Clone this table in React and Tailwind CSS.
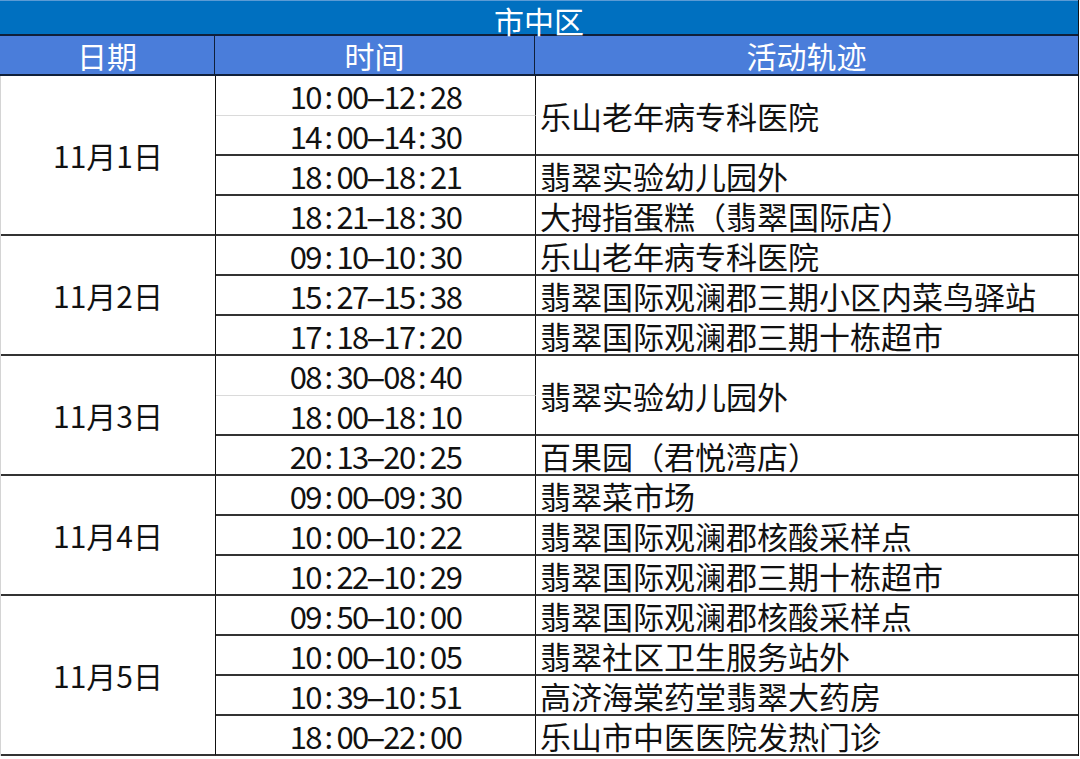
import React from "react";

// 每天的行程：span 表示地点单元格向下合并的行数，light 表示时间格下方是浅色分隔线
const days = [
  {
    date: "11月1日",
    rows: [
      { time: "10:00-12:28", place: "乐山老年病专科医院", span: 2, light: true },
      { time: "14:00-14:30" },
      { time: "18:00-18:21", place: "翡翠实验幼儿园外" },
      { time: "18:21-18:30", place: "大拇指蛋糕（翡翠国际店）" },
    ],
  },
  {
    date: "11月2日",
    rows: [
      { time: "09:10-10:30", place: "乐山老年病专科医院" },
      { time: "15:27-15:38", place: "翡翠国际观澜郡三期小区内菜鸟驿站" },
      { time: "17:18-17:20", place: "翡翠国际观澜郡三期十栋超市" },
    ],
  },
  {
    date: "11月3日",
    rows: [
      { time: "08:30-08:40", place: "翡翠实验幼儿园外", span: 2, light: true },
      { time: "18:00-18:10" },
      { time: "20:13-20:25", place: "百果园（君悦湾店）" },
    ],
  },
  {
    date: "11月4日",
    rows: [
      { time: "09:00-09:30", place: "翡翠菜市场" },
      { time: "10:00-10:22", place: "翡翠国际观澜郡核酸采样点" },
      { time: "10:22-10:29", place: "翡翠国际观澜郡三期十栋超市" },
    ],
  },
  {
    date: "11月5日",
    rows: [
      { time: "09:50-10:00", place: "翡翠国际观澜郡核酸采样点" },
      { time: "10:00-10:05", place: "翡翠社区卫生服务站外" },
      { time: "10:39-10:51", place: "高济海棠药堂翡翠大药房" },
      { time: "18:00-22:00", place: "乐山市中医医院发热门诊" },
    ],
  },
];

const rowSpan = { 1: "row-span-1", 2: "row-span-2", 3: "row-span-3", 4: "row-span-4" };

// 时间按等宽字符排开，跟原表格里的半角数字对齐方式一致
function TimeText({ value }) {
  return (
    <span className="inline-flex">
      {value.split("").map((ch, i) => (
        <span
          key={i}
          className={`inline-block w-[15.6px] text-center ${ch === "-" ? "scale-x-200" : ""}`}
        >
          {ch}
        </span>
      ))}
    </span>
  );
}

export default function App() {
  return (
    <div
      className="w-[1080px] h-[759px] bg-white text-[#111] text-[31px] leading-none"
      style={{ fontFamily: '"Noto Sans CJK SC", "Noto Sans", sans-serif' }}
    >
      <div className="w-[1079px] border-r border-[#111]">
        {/* 标题栏 */}
        <div className="h-[36px] pt-1 bg-[#0070c0] border-t border-[#5b9bd5] border-b-2 border-b-[#10203a] flex items-center justify-center text-white text-[30px]">
          市中区
        </div>

        {/* 列标题 */}
        <div className="grid grid-cols-[215px_320px_1fr] h-[40px] bg-[#4a7dda] border-b-2 border-[#10203a] text-white text-[30px]">
          <div className="flex items-center justify-center border-r border-[#10203a]">日期</div>
          <div className="flex items-center justify-center border-r border-[#10203a]">时间</div>
          <div className="flex items-center justify-center">活动轨迹</div>
        </div>

        {/* 表格主体 */}
        <div className="grid grid-cols-[215px_320px_1fr] grid-rows-[repeat(17,40px)] border-l border-[#d4d4d4]">
          {days.map((day) => (
            <React.Fragment key={day.date}>
              <div
                className={`col-start-1 ${rowSpan[day.rows.length]} flex items-center justify-center border-r border-b-2 border-r-[#111] border-b-[#333] text-[30px]`}
              >
                {day.date}
              </div>
              {day.rows.map((row, i) => (
                <React.Fragment key={i}>
                  <div
                    className={`col-start-2 flex items-center justify-center border-r border-r-[#111] ${
                      row.light ? "border-b border-b-[#dadada]" : "border-b-2 border-b-[#333]"
                    }`}
                  >
                    <TimeText value={row.time} />
                  </div>
                  {row.place && (
                    <div
                      className={`col-start-3 ${rowSpan[row.span || 1]} flex items-center pl-1 border-b-2 border-b-[#333]`}
                    >
                      {row.place}
                    </div>
                  )}
                </React.Fragment>
              ))}
            </React.Fragment>
          ))}
        </div>
      </div>
    </div>
  );
}
